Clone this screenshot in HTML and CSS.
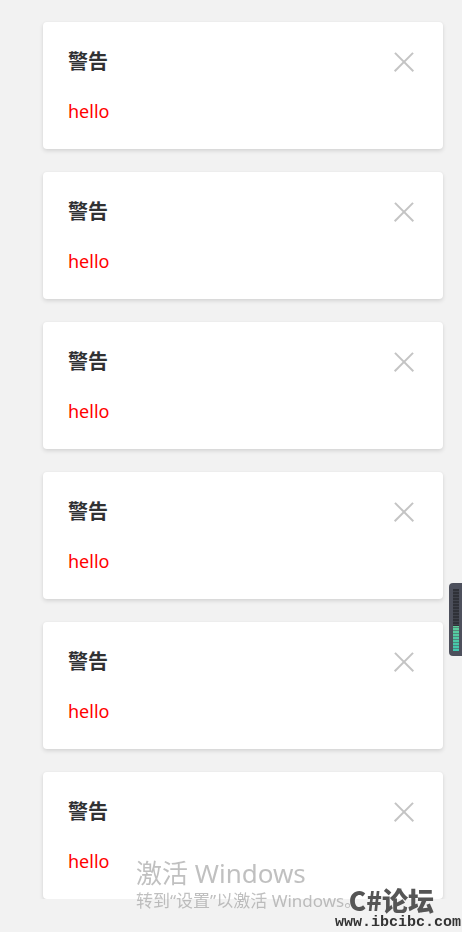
FILE: index.html
```html
<!DOCTYPE html>
<html lang="zh-CN">
<head>
<meta charset="utf-8">
<link rel="stylesheet" href="styles.css">
</head>
<body>
<div class="list">
  <div class="notice"><div class="title">警告</div><div class="content">hello</div><span class="close"></span></div>
  <div class="notice"><div class="title">警告</div><div class="content">hello</div><span class="close"></span></div>
  <div class="notice"><div class="title">警告</div><div class="content">hello</div><span class="close"></span></div>
  <div class="notice"><div class="title">警告</div><div class="content">hello</div><span class="close"></span></div>
  <div class="notice"><div class="title">警告</div><div class="content">hello</div><span class="close"></span></div>
  <div class="notice"><div class="title">警告</div><div class="content">hello</div><span class="close"></span></div>
</div>

<div class="widget"><div class="meter"></div></div>

<div class="activate">
  <div class="act-1">激活 Windows</div>
  <div class="act-2">转到“设置”以激活 Windows。</div>
</div>

<div class="logo">
  <div class="logo-name">C#论坛</div>
  <div class="logo-url">www.ibcibc.com</div>
</div>
</body>
</html>
```
FILE: styles.css
```css
html, body {
  margin: 0;
  padding: 0;
  background: #f2f2f2;
  font-family: "Noto Sans", "Noto Sans CJK SC", sans-serif;
}
.list {
  display: flex;
  flex-direction: column;
  gap: 23px;
  padding: 22px 0 0 43px;
}
.notice {
  position: relative;
  box-sizing: border-box;
  width: 400px;
  height: 127px;
  padding: 25px 25px 0 25px;
  background: #fff;
  border-radius: 4px;
  box-shadow: 0 2px 4px rgba(0, 0, 0, 0.12), 0 0 2px rgba(0, 0, 0, 0.04);
}
.title {
  font-family: "Noto Sans CJK SC", sans-serif;
  font-size: 20px;
  font-weight: 700;
  line-height: 28px;
  color: #303133;
}
.content {
  margin-top: 22px;
  font-size: 18px;
  line-height: 28px;
  color: #ff0000;
}
.close {
  position: absolute;
  top: 30px;
  right: 29px;
  width: 20px;
  height: 20px;
}
.close::before, .close::after {
  content: "";
  position: absolute;
  left: -3px;
  top: 9px;
  width: 26px;
  height: 2.4px;
  background: #c4c4c4;
  transform: rotate(45deg);
}
.close::after {
  transform: rotate(-45deg);
}
.widget {
  position: fixed;
  right: 0;
  top: 583px;
  width: 13px;
  height: 73px;
  box-sizing: border-box;
  padding: 6px 3px 5px 4px;
  background: #4d505c;
  border-radius: 4px 0 0 4px;
}
.meter {
  height: 100%;
  background:
    linear-gradient(to bottom, transparent 0, transparent 59%, #5fcf9a 59%, #3fc6b0 100%),
    #2f3138;
  -webkit-mask: repeating-linear-gradient(to bottom, #000 0 2px, rgba(0,0,0,0.45) 2px 3px);
  mask: repeating-linear-gradient(to bottom, #000 0 2px, rgba(0,0,0,0.45) 2px 3px);
}
.activate {
  position: fixed;
  left: 136px;
  top: 856px;
  color: rgba(150, 150, 150, 0.6);
  font-family: "Noto Sans", "Noto Sans CJK SC", sans-serif;
}
.act-1 {
  font-size: 26px;
  line-height: 34px;
}
.act-2 {
  width: 214px;
  overflow: hidden;
  white-space: nowrap;
  font-size: 17px;
  line-height: 22px;
}
.logo {
  position: fixed;
  left: 333px;
  top: 887px;
  display: flex;
  flex-direction: column;
  align-items: flex-end;
  gap: 3px;
  width: 128px;
}
.logo-name {
  font-family: "Noto Sans CJK SC", sans-serif;
  font-size: 26px;
  font-weight: 900;
  line-height: 26px;
  color: #555;
  margin-right: 27px;
}
.logo-url {
  font-family: "Liberation Mono", monospace;
  font-weight: 700;
  font-size: 15px;
  line-height: 14px;
  color: #333;
}
```
